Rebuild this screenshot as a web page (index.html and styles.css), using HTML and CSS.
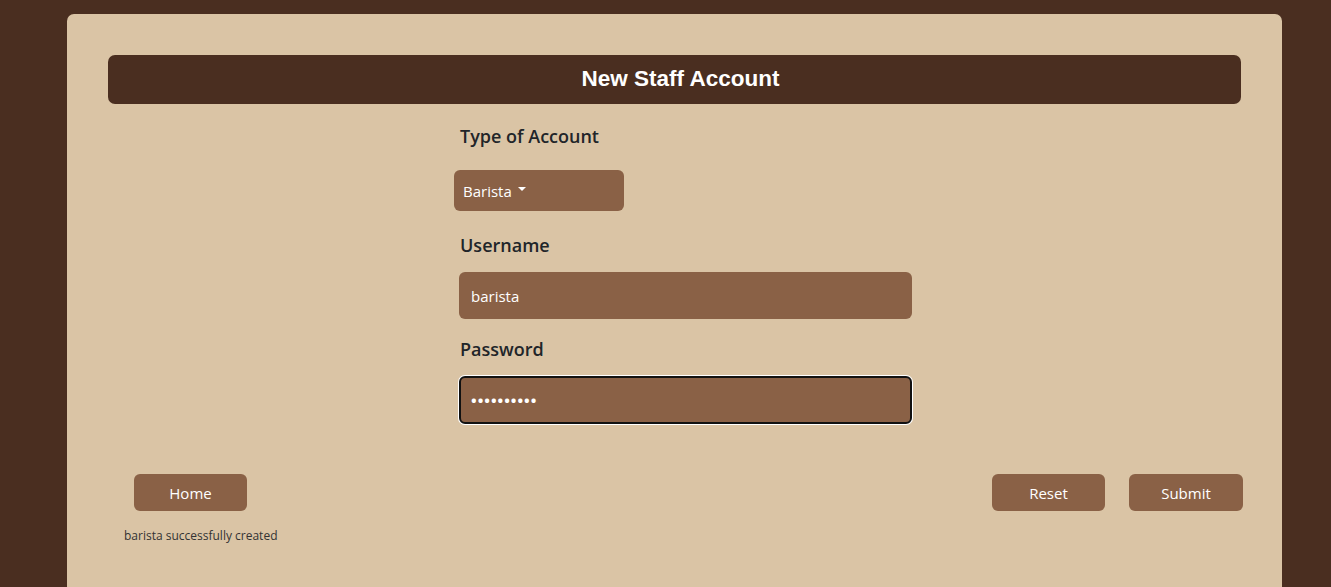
FILE: index.html
```html
<!DOCTYPE html>
<html lang="en">
<head>
<meta charset="utf-8">
<title>New Staff Account</title>
<link rel="stylesheet" href="styles.css">
</head>
<body>
<main class="card">
  <header class="title-bar"><h1>New Staff Account</h1></header>
  <form class="form">
    <label class="label">Type of Account</label>
    <button type="button" class="dropdown">Barista <span class="caret"></span></button>
    <label class="label" for="username">Username</label>
    <input id="username" class="field" type="text" value="barista">
    <label class="label" for="password">Password</label>
    <input id="password" class="field field-focus" type="password" value="barista123">
  </form>
  <div class="actions">
    <button type="button" class="btn">Home</button>
    <div class="actions-right">
      <button type="button" class="btn">Reset</button>
      <button type="button" class="btn btn-submit">Submit</button>
    </div>
  </div>
  <p class="message">barista successfully created</p>
</main>
</body>
</html>
```

FILE: styles.css
```css
html, body {
  margin: 0;
  padding: 0;
  background: #4a2e20;
  height: 100%;
  overflow: hidden;
}
body {
  font-family: "Open Sans", "Noto Sans", sans-serif;
  color: #212529;
}
.card {
  margin: 14px 0 0 67px;
  width: 1215px;
  min-height: 600px;
  background: #dac4a5;
  border-radius: 7px;
  padding: 41px 41px 0 41px;
  box-sizing: border-box;
}
.title-bar {
  background: #4a2e20;
  border-radius: 7px;
  height: 49px;
  display: flex;
  align-items: center;
  justify-content: center;
  padding-left: 12px;
  padding-bottom: 2px;
  box-sizing: border-box;
}
.title-bar h1 {
  margin: 0;
  font-family: "Liberation Sans", Arial, sans-serif;
  font-weight: bold;
  font-size: 22.5px;
  color: #ffffff;
}
.form {
  display: flex;
  flex-direction: column;
  align-items: flex-start;
  margin-left: 351px;
  width: 453px;
}
.label {
  font-size: 18px;
  font-weight: 600;
  line-height: 24px;
  margin: 20px 0 0 1px;
  color: #212529;
}
.dropdown {
  margin: 22px 0 0 -5px;
  width: 170px;
  height: 41px;
  background: #8a6146;
  border: none;
  border-radius: 6px;
  color: #ffffff;
  font-family: inherit;
  font-size: 15px;
  text-align: left;
  padding: 0 9px;
  display: flex;
  align-items: center;
  gap: 6px;
}
.caret {
  display: inline-block;
  width: 0;
  height: 0;
  border-left: 4px solid transparent;
  border-right: 4px solid transparent;
  border-top: 4px solid #ffffff;
  margin-top: -3px;
}
.dropdown + .label { margin-top: 22px; }
.field {
  margin-top: 15px;
  width: 453px;
  height: 47px;
  box-sizing: border-box;
  background: #8a6146;
  border: none;
  border-radius: 6px;
  color: #ffffff;
  font-family: inherit;
  font-size: 15px;
  padding: 0 12px;
  outline: none;
}
#username + .label { margin-top: 18px; }
.field-focus {
  margin-top: 15px;
  width: 453px;
  height: 48px;
  border: 2px solid #111111;
  box-shadow: 0 0 0 1px #ffffff;
  padding: 0 10px;
  letter-spacing: 1px;
  font-weight: 700;
}
.actions {
  display: flex;
  justify-content: space-between;
  margin: 50px -2px 0 26px;
}
.actions-right {
  display: flex;
  gap: 24px;
}
.btn {
  width: 113px;
  height: 37px;
  background: #8a6146;
  border: none;
  border-radius: 6px;
  color: #ffffff;
  font-family: inherit;
  font-size: 15px;
  font-weight: 500;
  padding: 0;
}
.btn-submit { width: 114px; }
.message {
  margin: 16px 0 0 16px;
  font-size: 12px;
  color: #333333;
}
```
